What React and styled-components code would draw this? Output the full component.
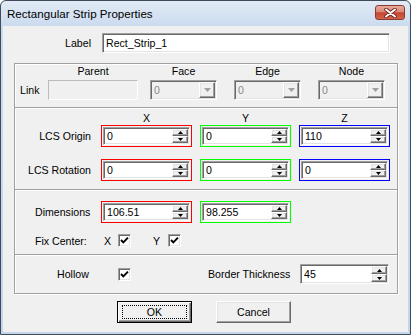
import React from "react";
import styled, { createGlobalStyle, css } from "styled-components";

const GlobalStyle = createGlobalStyle`
  html, body {
    margin: 0;
    padding: 0;
    background: #ffffff;
  }
  body {
    font-family: "Liberation Sans", Arial, sans-serif;
    font-size: 10.6px;
    color: #000;
  }
`;

const sunken = css`
  border: 1px solid;
  border-color: #a0a0a0 #ffffff #ffffff #a0a0a0;
  box-shadow: inset 1px 1px 0 #696969, inset -1px -1px 0 #e3e3e3;
`;

const raised = css`
  border: 1px solid;
  border-color: #ffffff #696969 #696969 #ffffff;
  box-shadow: inset -1px -1px 0 #a0a0a0, inset 1px 1px 0 #e3e3e3;
`;

const Window = styled.div`
    width: 411px;
    height: 335px;
    box-sizing: border-box;
    border: 1px solid #3e4b5b;
    border-radius: 6px 6px 0 0;
    background: linear-gradient(#e2ebf6, #cbdbee 25px, #c3d6ec);
    padding: 0 2px 2px;
    display: flex;
    flex-direction: column;
`;

const TitleBar = styled.div`
    height: 25px;
    display: flex;
    align-items: center;
    padding-left: 4px;
`;

const TitleText = styled.span`
    flex: 1;
    font-size: 11.6px;
    color: #000;
`;

const CloseButton = styled.div`
    align-self: flex-start;
    margin-top: 4px;
    margin-right: 3px;
    width: 30px;
    height: 15px;
    box-sizing: border-box;
    border: 1px solid #8a3a2e;
    border-radius: 3px;
    background: linear-gradient(#e9aa9c 0%, #d98877 45%, #c4452f 52%, #d2644b 100%);
    display: flex;
    align-items: center;
    justify-content: center;
`;

const Client = styled.div`
    flex: 1;
    background: #f0f0f0;
    padding: 7px 10px 0 11px;
    display: flex;
    flex-direction: column;
`;

const LabelRow = styled.div`
    display: grid;
    grid-template-columns: 88px 288px;
    align-items: center;
`;

const RightLabel = styled.span`
    text-align: right;
    padding-right: ${p => p.$pr || 11}px;
`;

const TextBox = styled.div`
    box-sizing: border-box;
    height: 20px;
    ${sunken}
    background: #fff;
    padding: 0 3px;
    display: flex;
    align-items: center;
`;

const Stack = styled.div`
    margin-top: 10px;
    width: 384px;
    box-sizing: border-box;
    border: 1px solid #a0a0a0;
    box-shadow: inset 1px 1px 0 #fff, 1px 1px 0 #fff;
`;

const Section = styled.div`
    box-sizing: border-box;
    height: ${p => p.$h}px;
    padding-top: ${p => p.$pt || 0}px;
    padding-left: ${p => p.$pl || 0}px;
    display: flex;
    flex-direction: column;
    & + & {
        border-top: 1px solid #a0a0a0;
        box-shadow: inset 0 1px 0 #fff;
    }
`;

const LinkGrid = styled.div`
    display: grid;
    grid-template-columns: 28px 102px 84px 84px 67px;
    grid-template-rows: 14px 20px;
    row-gap: 2px;
    align-items: center;
`;

const Header = styled.span`
    width: ${p => p.$w}px;
    text-align: center;
    line-height: 14px;
`;

const DisabledBox = styled.div`
    box-sizing: border-box;
    width: 90px;
    height: 20px;
    border: 1px solid;
    border-color: #bcbcbc #ffffff #ffffff #bcbcbc;
    background: #f0f0f0;
`;

const Combo = styled.div`
    box-sizing: border-box;
    width: 67px;
    height: 20px;
    ${sunken}
    padding: 1px;
    background: #f0f0f0;
    display: flex;
`;

const ComboText = styled.span`
    flex: 1;
    display: flex;
    align-items: center;
    padding-left: 2px;
    color: #8a8a8a;
`;

const DropButton = styled.div`
    box-sizing: border-box;
    width: 16px;
    ${raised}
    background: #f0f0f0;
    display: flex;
    align-items: center;
    justify-content: center;
`;

const FieldGrid = styled.div`
    display: grid;
    grid-template-columns: ${p => p.$cols};
    column-gap: 8px;
    align-items: center;
    height: ${p => p.$h}px;
    margin-top: ${p => p.$mt || 0}px;
`;

const Frame = styled.div`
    box-sizing: border-box;
    width: ${p => p.$w}px;
    height: ${p => p.$h}px;
    border: ${p => (p.$color ? `1px solid ${p.$color}` : "none")};
    padding: ${p => (p.$color ? "1px" : "0")};
`;

const Edit = styled.div`
    box-sizing: border-box;
    width: 100%;
    height: 100%;
    ${sunken}
    padding: 1px;
    background: #fff;
    display: flex;
`;

const EditText = styled.span`
    flex: 1;
    display: flex;
    align-items: center;
    padding-left: 2px;
`;

const Spin = styled.div`
    width: 16px;
    display: flex;
    flex-direction: column;
`;

const SpinHalf = styled.div`
    flex: 1;
    box-sizing: border-box;
    ${raised}
    background: #f0f0f0;
    display: flex;
    align-items: center;
    justify-content: center;
`;

const CheckRow = styled.div`
    display: flex;
    align-items: center;
    height: 13px;
    margin-top: ${p => p.$mt || 0}px;
`;

const InlineLabel = styled.span`
    width: ${p => p.$w}px;
    margin-left: ${p => p.$ml || 0}px;
    flex: none;
`;

const CheckBox = styled.div`
    box-sizing: border-box;
    width: 13px;
    height: 13px;
    flex: none;
    ${sunken}
    background: #fff;
    display: flex;
    align-items: center;
    justify-content: center;
`;

const HollowRow = styled.div`
    display: flex;
    align-items: center;
    height: 20px;
    padding-left: 42px;
`;

const ButtonRow = styled.div`
    display: flex;
    gap: 24px;
    padding-left: 103px;
    margin-top: 7px;
`;

const PushButton = styled.div`
    box-sizing: border-box;
    width: 75px;
    height: 22px;
    background: #f0f0f0;
    display: flex;
    align-items: center;
    justify-content: center;
    ${p =>
        p.$default
            ? css`
                  border: 1px solid #000;
                  box-shadow: inset 1px 1px 0 #fff, inset -1px -1px 0 #696969,
                      inset -2px -2px 0 #a0a0a0;
                  padding: 3px 4px;
              `
            : raised}
`;

const FocusRing = styled.span`
    flex: 1;
    align-self: stretch;
    border: 1px dotted #000;
    display: flex;
    align-items: center;
    justify-content: center;
`;

function Tri({ up, color = "#000" }) {
    return (
        <svg width="5" height="3" viewBox="0 0 5 3">
            <polygon points={up ? "2.5,0 5,3 0,3" : "0,0 5,0 2.5,3"} fill={color} />
        </svg>
    );
}

function SpinBox({ color, value, w = 91, h = 22 }) {
    return (
        <Frame $color={color} $w={w} $h={h}>
            <Edit>
                <EditText>{value}</EditText>
                <Spin>
                    <SpinHalf><Tri up /></SpinHalf>
                    <SpinHalf><Tri /></SpinHalf>
                </Spin>
            </Edit>
        </Frame>
    );
}

function Check() {
    return (
        <CheckBox>
            <svg width="9" height="9" viewBox="0 0 9 9">
                <polyline points="1,4 3.3,6.4 8,1.6" fill="none" stroke="#000" strokeWidth="1.9" />
            </svg>
        </CheckBox>
    );
}

function DisabledCombo() {
    return (
        <Combo>
            <ComboText>0</ComboText>
            <DropButton>
                <svg width="7" height="4" viewBox="0 0 7 4">
                    <polygon points="0,0 7,0 3.5,4" fill="#a0a0a0" />
                </svg>
            </DropButton>
        </Combo>
    );
}

const RED = "#ff0000";
const GREEN = "#00ff00";
const BLUE = "#0000ff";

function App() {
    return (
        <>
            <GlobalStyle />
            <Window>
                <TitleBar>
                    <TitleText>Rectangular Strip Properties</TitleText>
                    <CloseButton>
                        <svg width="13" height="10" viewBox="0 0 13 10">
                            <path d="M2 1.5 L11 8.5 M11 1.5 L2 8.5" stroke="#6b2118" strokeWidth="3.6" strokeLinecap="round" />
                            <path d="M2 1.5 L11 8.5 M11 1.5 L2 8.5" stroke="#fff" strokeWidth="2" strokeLinecap="round" />
                        </svg>
                    </CloseButton>
                </TitleBar>
                <Client>
                    <LabelRow>
                        <RightLabel>Label</RightLabel>
                        <TextBox>Rect_Strip_1</TextBox>
                    </LabelRow>

                    <Stack>
                        <Section $h={43} $pl={5}>
                            <LinkGrid>
                                <span />
                                <Header $w={90}>Parent</Header>
                                <Header $w={67}>Face</Header>
                                <Header $w={67}>Edge</Header>
                                <Header $w={67}>Node</Header>
                                <span>Link</span>
                                <DisabledBox />
                                <DisabledCombo />
                                <DisabledCombo />
                                <DisabledCombo />
                            </LinkGrid>
                        </Section>

                        <Section $h={82} $pt={3}>
                            <FieldGrid $cols="78px 91px 91px 91px" $h={14}>
                                <span />
                                <Header $w={91}>X</Header>
                                <Header $w={91}>Y</Header>
                                <Header $w={91}>Z</Header>
                            </FieldGrid>
                            <FieldGrid $cols="78px 91px 91px 91px" $h={22}>
                                <RightLabel $pr={2}>LCS Origin</RightLabel>
                                <SpinBox color={RED} value="0" />
                                <SpinBox color={GREEN} value="0" />
                                <SpinBox color={BLUE} value="110" />
                            </FieldGrid>
                            <FieldGrid $cols="78px 91px 91px 91px" $h={22} $mt={12}>
                                <RightLabel $pr={2}>LCS Rotation</RightLabel>
                                <SpinBox color={RED} value="0" />
                                <SpinBox color={GREEN} value="0" />
                                <SpinBox color={BLUE} value="0" />
                            </FieldGrid>
                        </Section>

                        <Section $h={65} $pt={11} $pl={20}>
                            <FieldGrid $cols="58px 91px 91px" $h={22}>
                                <span>Dimensions</span>
                                <SpinBox color={RED} value="106.51" />
                                <SpinBox color={GREEN} value="98.255" />
                            </FieldGrid>
                            <CheckRow $mt={11}>
                                <InlineLabel $w={69}>Fix Center:</InlineLabel>
                                <InlineLabel $w={14}>X</InlineLabel>
                                <Check />
                                <InlineLabel $w={15} $ml={22}>Y</InlineLabel>
                                <Check />
                            </CheckRow>
                        </Section>

                        <Section $h={39} $pt={9}>
                            <HollowRow>
                                <InlineLabel $w={61}>Hollow</InlineLabel>
                                <Check />
                                <InlineLabel $w={92} $ml={77}>Border Thickness</InlineLabel>
                                <SpinBox value="45" w={89} h={20} />
                            </HollowRow>
                        </Section>
                    </Stack>

                    <ButtonRow>
                        <PushButton $default>
                            <FocusRing>OK</FocusRing>
                        </PushButton>
                        <PushButton>Cancel</PushButton>
                    </ButtonRow>
                </Client>
            </Window>
        </>
    );
}

export default App;
